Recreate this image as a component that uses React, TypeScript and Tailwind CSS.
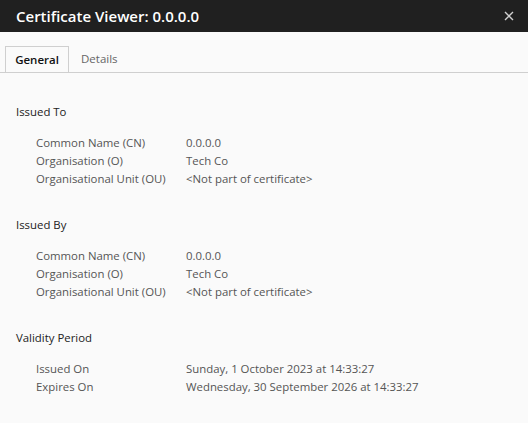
import React from "react";

const sections = [
  {
    title: "Issued To",
    rows: [
      ["Common Name (CN)", "0.0.0.0"],
      ["Organisation (O)", "Tech Co"],
      ["Organisational Unit (OU)", "<Not part of certificate>"],
    ],
  },
  {
    title: "Issued By",
    rows: [
      ["Common Name (CN)", "0.0.0.0"],
      ["Organisation (O)", "Tech Co"],
      ["Organisational Unit (OU)", "<Not part of certificate>"],
    ],
  },
  {
    title: "Validity Period",
    rows: [
      ["Issued On", "Sunday, 1 October 2023 at 14:33:27"],
      ["Expires On", "Wednesday, 30 September 2026 at 14:33:27"],
    ],
  },
];

export default function App() {
  return (
    <div className="flex h-[423px] w-[528px] flex-col overflow-hidden bg-[#fafafa] font-['Segoe_UI','Open_Sans',sans-serif]">
      {/* Title bar */}
      <div className="flex h-8 shrink-0 items-center justify-between bg-[#202020] pl-4 pr-3">
        <h1 className="text-[15px] font-semibold text-white">Certificate Viewer: 0.0.0.0</h1>
        <svg width="10" height="10" viewBox="0 0 10 10" stroke="#d0d0d0" strokeWidth="1.4" className="mr-0.5">
          <path d="M1 1l8 8M9 1l-8 8" />
        </svg>
      </div>

      {/* Tabs */}
      <div className="mt-[14px] flex border-b border-[#cfcfcf] pl-[5px] text-[11.5px]">
        <div className="-mb-px flex h-[26px] w-[64px] items-center justify-center border border-b-0 border-[#cfcfcf] bg-[#fafafa] font-semibold text-[#111]">
          General
        </div>
        <div className="flex h-[26px] items-center px-3 text-[#666]">Details</div>
      </div>

      {/* Content */}
      <div className="flex flex-col gap-[28px] px-4 pt-[30px] text-[11.4px]">
        {sections.map((s) => (
          <div key={s.title}>
            <div className="leading-[18px] text-[#222]">{s.title}</div>
            <div className="mt-[13px] pl-5">
              {s.rows.map(([k, v]) => (
                <div key={k} className="flex leading-[18px] text-[#555]">
                  <span className="w-[150px] shrink-0">{k}</span>
                  <span>{v}</span>
                </div>
              ))}
            </div>
          </div>
        ))}
      </div>
    </div>
  );
}
